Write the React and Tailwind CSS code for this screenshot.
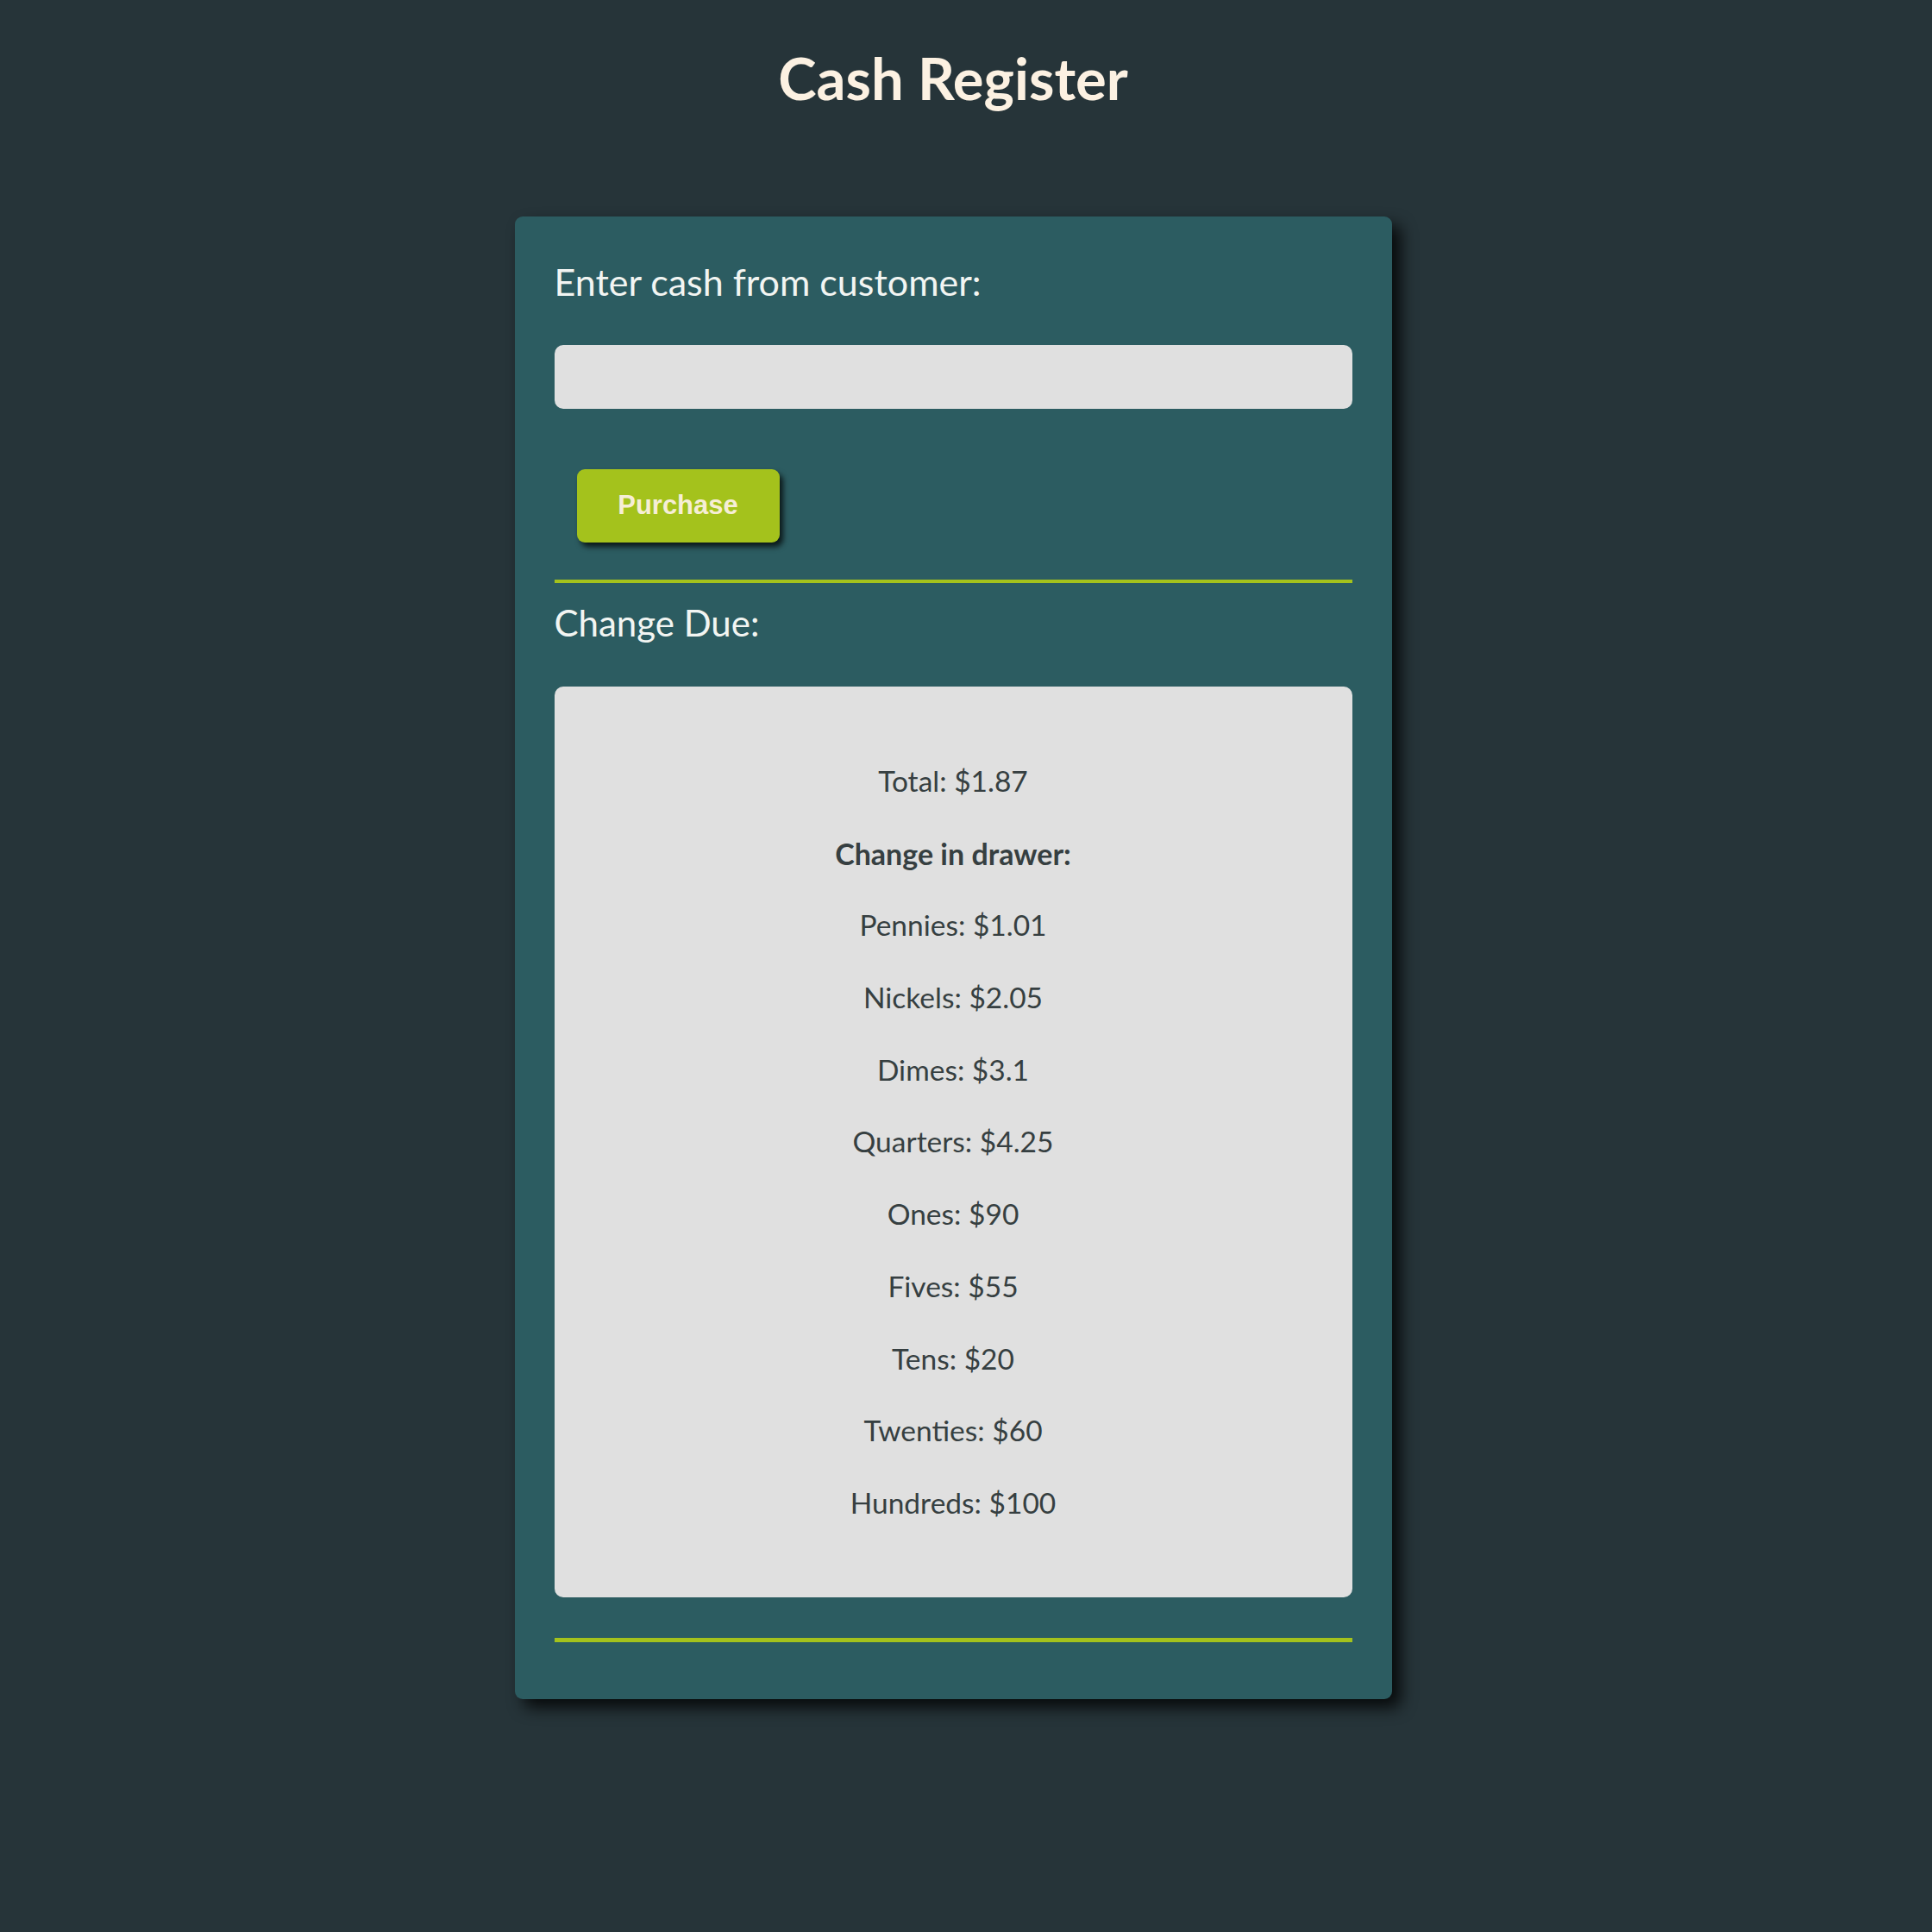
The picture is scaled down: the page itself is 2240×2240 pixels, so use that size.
const drawer = [
  { label: "Pennies", value: "$1.01" },
  { label: "Nickels", value: "$2.05" },
  { label: "Dimes", value: "$3.1" },
  { label: "Quarters", value: "$4.25" },
  { label: "Ones", value: "$90" },
  { label: "Fives", value: "$55" },
  { label: "Tens", value: "$20" },
  { label: "Twenties", value: "$60" },
  { label: "Hundreds", value: "$100" },
];

function App() {
  return (
    <div className="min-h-[2240px] w-full bg-[#263439] font-['Lato',sans-serif]">
      <div className="w-[2210px] flex flex-col items-center">
        {/* ===== TITLE ===== */}
        <h1 className="mt-[57px] h-[66px] leading-[66px] text-[67px] font-bold text-[#fcf1e2]">
          Cash Register
        </h1>

        {/* ===== REGISTER CARD ===== */}
        <div className="mt-[128px] w-[1017px] bg-[#2c5c61] rounded-[9px] px-[46px] pt-[46px] pb-[66px] shadow-[10px_10px_18px_rgba(0,0,0,0.8)]">
          <label className="block h-[60px] leading-[60px] text-[43px] text-[#f2f5f2]">
            Enter cash from customer:
          </label>
          <input
            type="text"
            className="mt-[43px] block w-full h-[74px] rounded-[10px] bg-[#e0e0e0] outline-none px-4 text-[30px]"
          />

          <button className="mt-[70px] ml-[26px] w-[235px] h-[85px] rounded-[9px] bg-[#a4c21c] text-[#f6eed6] text-[31px] font-bold font-['Liberation_Sans',sans-serif] shadow-[4px_5px_6px_rgba(0,0,0,0.75)]">
            Purchase
          </button>

          <div className="mt-[43px] h-[4px] bg-[#a4c21c]" />

          <div className="mt-[16px] h-[60px] leading-[60px] text-[42px] text-[#f2f5f2]">
            Change Due:
          </div>

          {/* ===== CHANGE BOX ===== */}
          <div className="mt-[44px] h-[1056px] rounded-[10px] bg-[#e0e0e0] py-[68px] text-center text-[33.5px] text-[#363f41]">
            <p className="h-[83.7px] leading-[83.7px]">Total: $1.87</p>
            <p className="h-[83.7px] leading-[83.7px] font-bold text-[34px]">Change in drawer:</p>
            {drawer.map((item) => (
              <p key={item.label} className="h-[83.7px] leading-[83.7px]">
                {item.label}: {item.value}
              </p>
            ))}
          </div>

          <div className="mt-[47px] h-[5px] bg-[#a4c21c]" />
        </div>
      </div>
    </div>
  );
}

export default App;
